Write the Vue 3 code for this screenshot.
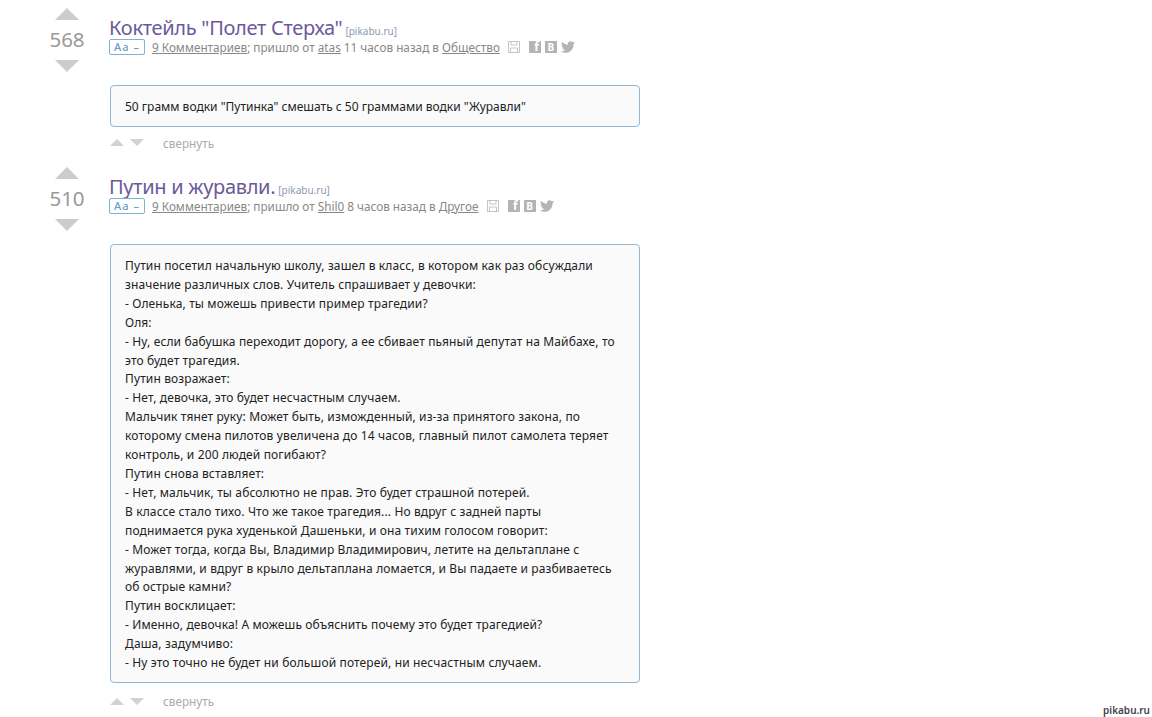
<template>
  <div class="page">
    <div v-for="post in posts" :key="post.title" class="post">
      <div class="vote">
        <svg class="vote-arrow" width="24" height="12" viewBox="0 0 24 12"><path d="M12 0L24 12H0z" /></svg>
        <div class="score">{{ post.score }}</div>
        <svg class="vote-arrow" width="24" height="12" viewBox="0 0 24 12"><path d="M0 0H24L12 12z" /></svg>
      </div>
      <div class="main">
        <div class="title-row">
          <span class="title">{{ post.title }}</span>
          <span class="source">[pikabu.ru]</span>
        </div>
        <div class="meta">
          <span class="badge">Aa –</span>
          <span class="meta-text">
            <u>9 Комментариев</u>; пришло от <u>{{ post.author }}</u> {{ post.time }} часов назад в
            <u>{{ post.category }}</u>
          </span>
          <svg class="save" width="12" height="12" viewBox="0 0 12 12">
            <path d="M.5.5h11v11H.5zM3 .5v3.500h6V.5M2.500 11.500V7h7v4.500" fill="none" stroke="#c4c4c4" />
          </svg>
          <span class="social fb">f</span>
          <span class="social">В</span>
          <svg class="bird" width="14" height="12" viewBox="0 0 24 20">
            <path d="M24 2.400c-.9.400-1.800.700-2.800.800 1-.6 1.800-1.600 2.200-2.700-1 .6-2 1-3.100 1.200C19.300.7 18 0 16.600 0c-2.700 0-4.900 2.200-4.900 4.900 0 .4 0 .8.100 1.100C7.700 5.800 4.100 3.900 1.700.9 1.200 1.600 1 2.500 1 3.400c0 1.700.9 3.200 2.200 4.100-.8 0-1.600-.2-2.200-.6v.1c0 2.400 1.700 4.400 3.900 4.800-.4.100-.8.200-1.300.2-.3 0-.6 0-.9-.1.600 2 2.400 3.400 4.600 3.400-1.700 1.300-3.800 2.100-6.100 2.100-.4 0-.8 0-1.200-.1C2.200 19.300 4.800 20 7.500 20c9.100 0 14-7.500 14-14v-.6c1-.7 1.800-1.600 2.500-3z" />
          </svg>
        </div>
        <div class="story" :class="{ short: post.lines.length === 1 }">
          <div v-for="line in post.lines" :key="line">{{ line }}</div>
        </div>
        <div class="footer">
          <svg class="small-arrow" width="14" height="7" viewBox="0 0 14 7"><path d="M7 0L14 7H0z" /></svg>
          <svg class="small-arrow" width="14" height="7" viewBox="0 0 14 7"><path d="M0 0H14L7 7z" /></svg>
          <span class="collapse">свернуть</span>
        </div>
      </div>
    </div>
    <div class="watermark">pikabu.ru</div>
  </div>
</template>

<script setup>
const posts = [
  {
    score: 568,
    title: 'Коктейль "Полет Стерха"',
    author: "atas",
    time: 11,
    category: "Общество",
    lines: ['50 грамм водки "Путинка" смешать с 50 граммами водки "Журавли"'],
  },
  {
    score: 510,
    title: "Путин и журавли.",
    author: "Shil0",
    time: 8,
    category: "Другое",
    lines: [
      "Путин посетил начальную школу, зашел в класс, в котором как раз обсуждали",
      "значение различных слов. Учитель спрашивает у девочки:",
      "- Оленька, ты можешь привести пример трагедии?",
      "Оля:",
      "- Ну, если бабушка переходит дорогу, а ее сбивает пьяный депутат на Майбахе, то",
      "это будет трагедия.",
      "Путин возражает:",
      "- Нет, девочка, это будет несчастным случаем.",
      "Мальчик тянет руку: Может быть, изможденный, из-за принятого закона, по",
      "которому смена пилотов увеличена до 14 часов, главный пилот самолета теряет",
      "контроль, и 200 людей погибают?",
      "Путин снова вставляет:",
      "- Нет, мальчик, ты абсолютно не прав. Это будет страшной потерей.",
      "В классе стало тихо. Что же такое трагедия... Но вдруг с задней парты",
      "поднимается рука худенькой Дашеньки, и она тихим голосом говорит:",
      "- Может тогда, когда Вы, Владимир Владимирович, летите на дельтаплане с",
      "журавлями, и вдруг в крыло дельтаплана ломается, и Вы падаете и разбиваетесь",
      "об острые камни?",
      "Путин восклицает:",
      "- Именно, девочка! А можешь объяснить почему это будет трагедией?",
      "Даша, задумчиво:",
      "- Ну это точно не будет ни большой потерей, ни несчастным случаем.",
    ],
  },
];
</script>

<style>
html,
body {
  background: #fff;
  overflow: hidden;
}
</style>

<style scoped>
.page {
  position: relative;
  height: 717px;
  padding-top: 8px;
  box-sizing: border-box;
  font-family: "Noto Sans", sans-serif;
  overflow: hidden;
}
.post {
  display: flex;
  height: 159px;
  padding-left: 55px;
}
.post + .post {
  height: auto;
}
.vote {
  width: 24px;
  margin-right: 30px;
  display: flex;
  flex-direction: column;
  align-items: center;
}
.vote-arrow {
  display: block;
  fill: #ccc;
  flex: none;
}
.score {
  height: 40px;
  line-height: 38px;
  font-size: 20.500px;
  color: #999;
}
.main {
  width: 531px;
}
.title-row {
  height: 20px;
  margin-top: 10px;
  line-height: 20px;
  white-space: nowrap;
}
.title {
  display: inline-block;
  font-size: 20px;
  line-height: 20px;
  letter-spacing: -0.300px;
  color: #6b5a9b;
}
.source {
  display: inline-block;
  margin-left: 3px;
  font-size: 10px;
  line-height: 12px;
  color: #8c9bb0;
}
.meta {
  display: flex;
  align-items: center;
  height: 17px;
  font-size: 11.750px;
  color: #888;
  white-space: nowrap;
}
.badge {
  width: 36px;
  height: 16px;
  box-sizing: border-box;
  border: 1px solid #7fb2d4;
  border-radius: 2px;
  margin-right: 7px;
  font-size: 11px;
  font-weight: 500;
  letter-spacing: 1px;
  line-height: 14px;
  text-align: center;
  color: #6a9fc4;
}
.save {
  margin-left: 8px;
  margin-right: 9px;
}
.social {
  width: 12px;
  height: 12px;
  margin-right: 4px;
  background: #b4b4b4;
  color: #fff;
  font-size: 10px;
  font-weight: bold;
  line-height: 12px;
  text-align: center;
}
.fb {
  font-size: 12px;
  text-align: right;
  padding-right: 2px;
  width: 10px;
}
.bird {
  fill: #b4b4b4;
}
.story {
  box-sizing: border-box;
  margin-top: 30px;
  margin-left: 1px;
  padding: 12px 15px 8.700px 14px;
  border: 1px solid #8fb8d8;
  border-radius: 4px;
  background: #fafafa;
  font-size: 12px;
  line-height: 18.900px;
  letter-spacing: 0.130px;
  color: #222;
  white-space: nowrap;
}
.story.short {
  letter-spacing: 0;
}
.footer {
  display: flex;
  align-items: center;
  gap: 6px;
  height: 20px;
  margin-top: 8.500px;
  margin-left: 1px;
}
.story.short + .footer {
  margin-top: 6px;
}
.small-arrow {
  fill: #d2d2d2;
}
.collapse {
  margin-left: 13px;
  font-size: 11.750px;
  color: #aaa;
}
.watermark {
  position: absolute;
  right: 2px;
  bottom: 0;
  font-size: 10px;
  font-weight: 600;
  color: #444;
  text-shadow: 0 0 2px #fff;
}
</style>
